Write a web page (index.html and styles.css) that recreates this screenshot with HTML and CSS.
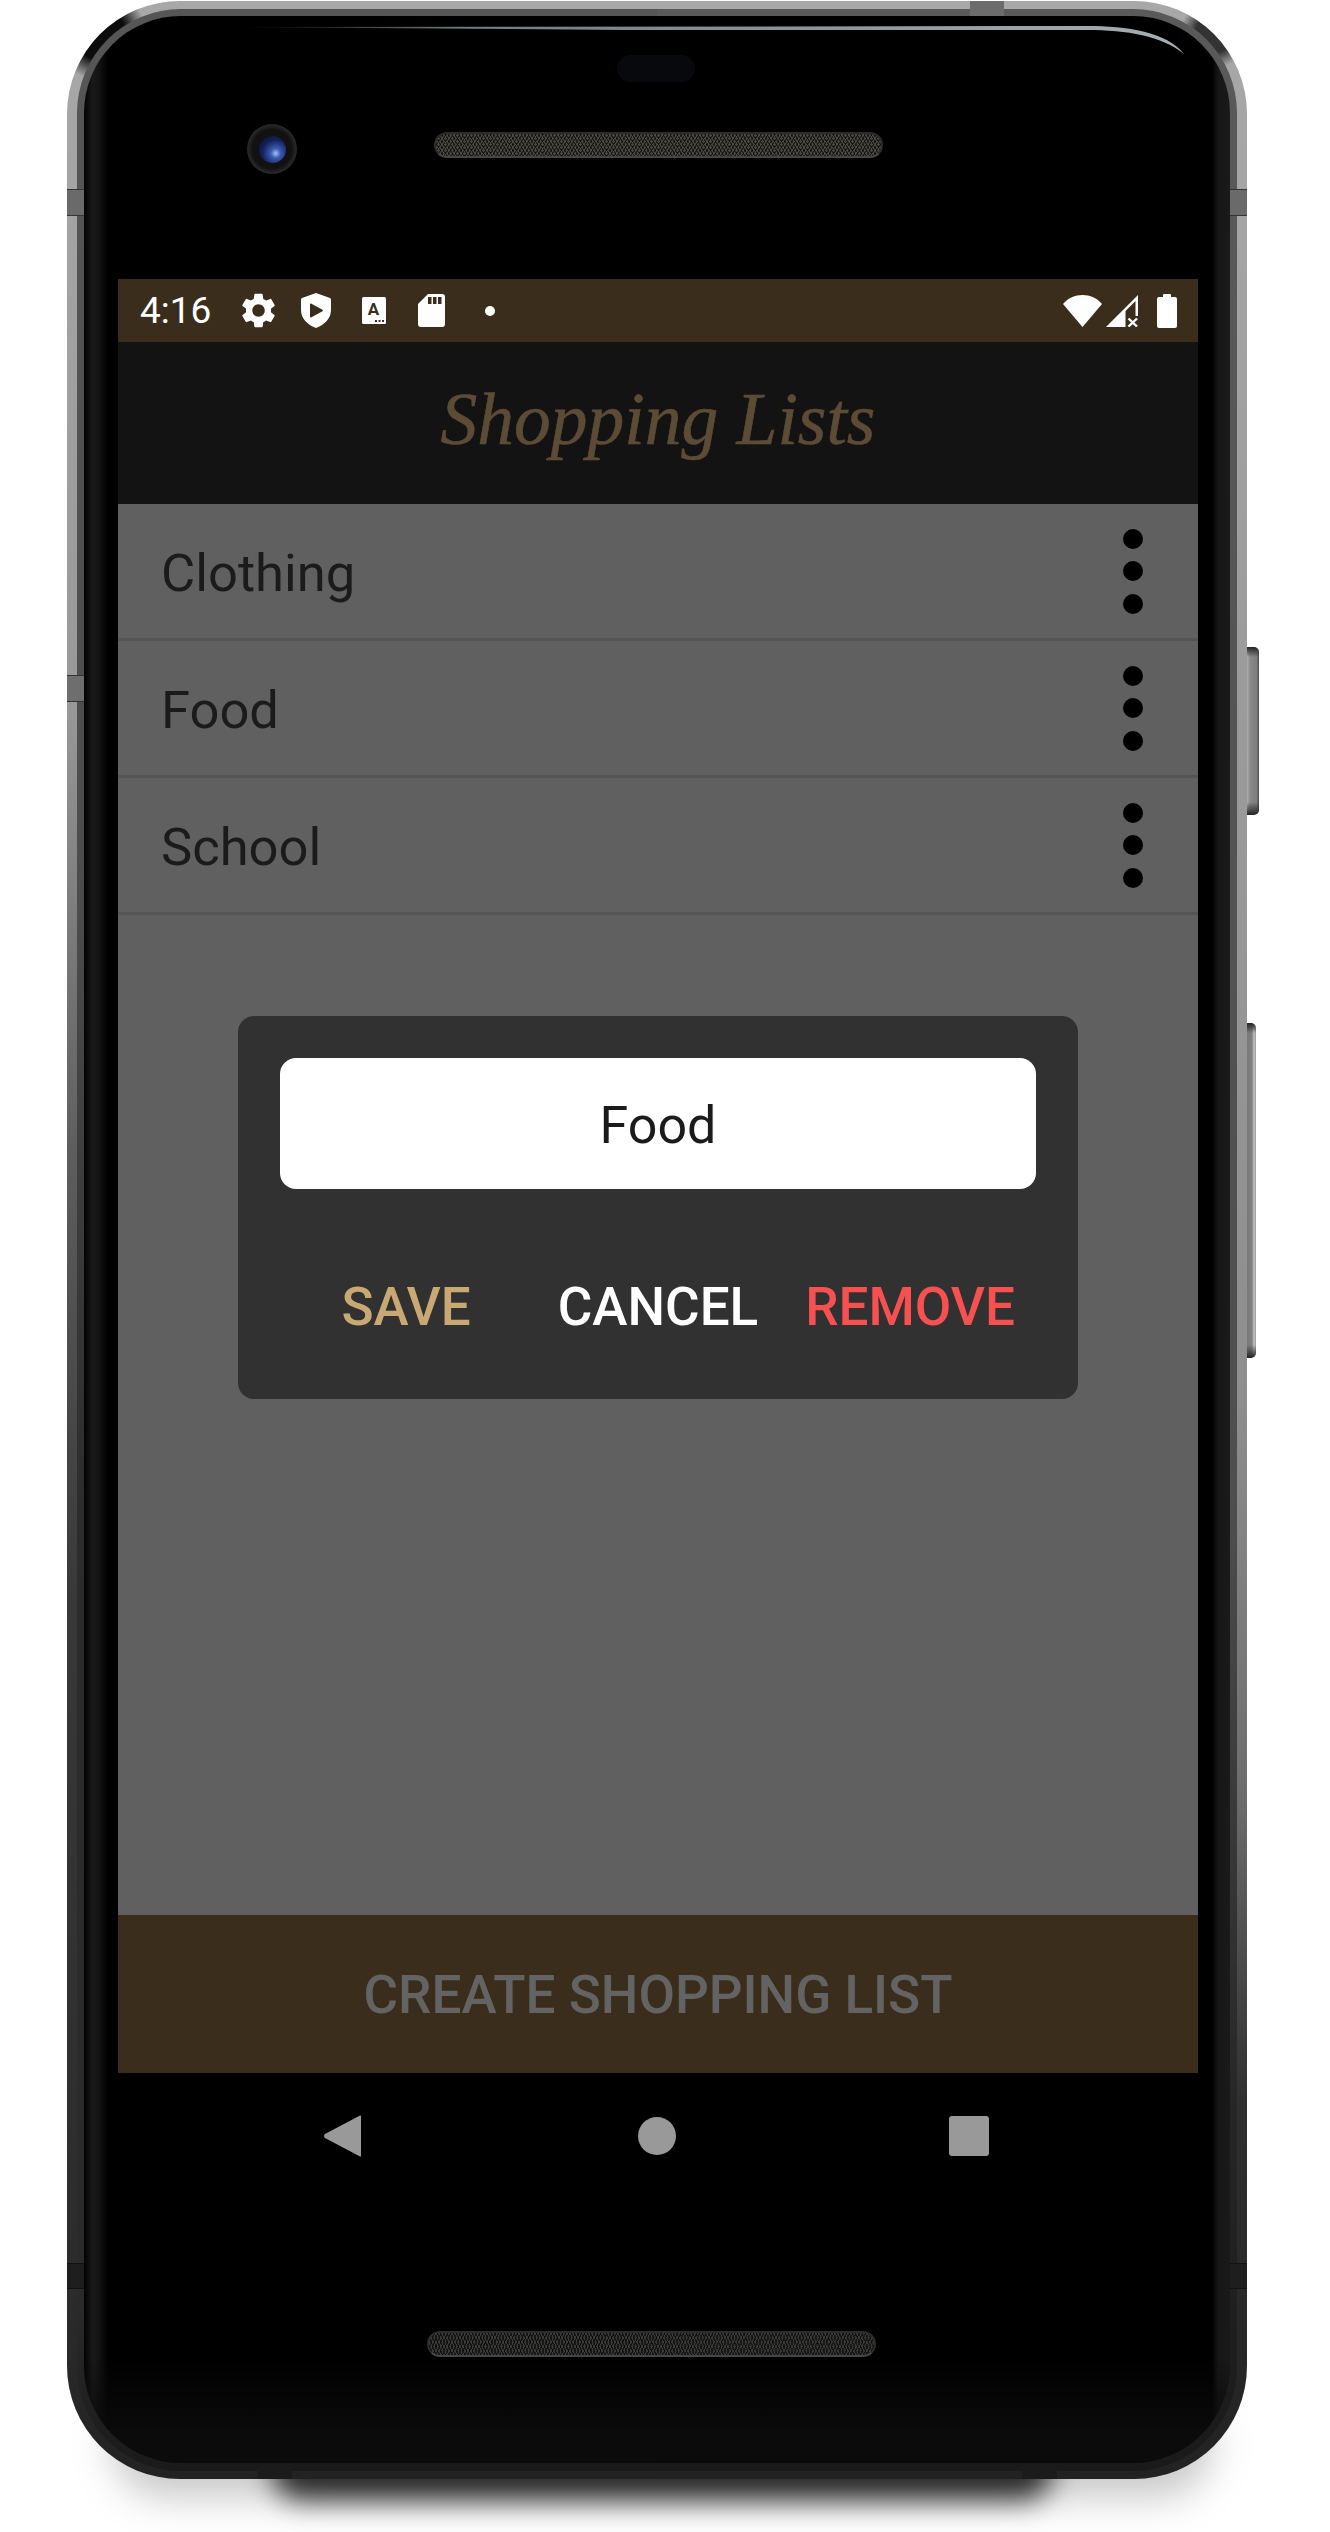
FILE: index.html
```html
<!DOCTYPE html>
<html>
<head>
  <meta charset="UTF-8">
  <title>Shopping Lists</title>
  <link rel="stylesheet" href="styles.css">
</head>
<body>
  <div class="phone">
    <div class="shadow"></div>
    <div class="btn-power"></div>
    <div class="btn-volume"></div>
    <div class="joint joint-left"></div>
    <div class="joint joint-left-mid"></div>
    <div class="joint joint-right"></div>
    <div class="joint joint-left-low"></div>
    <div class="joint joint-right-low"></div>
    <div class="joint joint-top"></div>
    <div class="joint joint-bottom-a"></div>
    <div class="joint joint-bottom-b"></div>

    <div class="metal">
      <div class="band">
        <div class="face">
          <svg class="gloss" width="960" height="34" viewBox="0 0 960 34">
            <defs>
              <linearGradient id="glossfade" x1="0" x2="1" y1="0" y2="0">
                <stop offset="0" stop-color="#a5b0b3" stop-opacity="0"/>
                <stop offset="0.25" stop-color="#a5b0b3" stop-opacity="0.7"/>
                <stop offset="1" stop-color="#a5b0b3" stop-opacity="1"/>
              </linearGradient>
            </defs>
            <path d="M0 3 L860 2 C900 2 940 8 957 30 C935 12 900 6 860 6 L400 6 Z" fill="url(#glossfade)"/>
          </svg>

          <div class="bezel-top">
            <div class="earpiece"></div>
            <div class="sensors">
              <div class="camera"><div class="lens"></div></div>
              <div class="speaker"></div>
            </div>
          </div>

          <div class="screen">
            <div class="statusbar">
              <span class="time">4:16</span>
              <svg class="ic-gear" width="33" height="35" viewBox="2.5 2 19 20"><path fill="#fff" d="M19.14 12.94c.04-.3.06-.61.06-.94 0-.32-.02-.64-.07-.94l2.03-1.58c.18-.14.23-.41.12-.61l-1.92-3.32c-.12-.22-.37-.29-.59-.22l-2.39.96c-.5-.38-1.03-.7-1.62-.94l-.36-2.54c-.04-.24-.24-.41-.48-.41h-3.84c-.24 0-.43.17-.47.41l-.36 2.54c-.59.24-1.13.57-1.62.94l-2.39-.96c-.22-.08-.47 0-.59.22L2.74 8.87c-.12.21-.08.47.12.61l2.03 1.58c-.05.3-.09.63-.09.94s.02.64.07.94l-2.03 1.58c-.18.14-.23.41-.12.61l1.92 3.32c.12.22.37.29.59.22l2.39-.96c.5.38 1.03.7 1.62.94l.36 2.54c.05.24.24.41.48.41h3.84c.24 0 .44-.17.47-.41l.36-2.54c.59-.24 1.13-.56 1.62-.94l2.39.96c.22.08.47 0 .59-.22l1.92-3.32c.12-.22.07-.47-.12-.61l-2.01-1.58zM12 15.6c-1.98 0-3.6-1.62-3.6-3.6s1.62-3.6 3.6-3.6 3.6 1.62 3.6 3.6-1.62 3.6-3.6 3.6z"/></svg>
              <svg class="ic-shield" width="30" height="35" viewBox="0 0 30 35"><path fill="#fff" fill-rule="evenodd" d="M15 0 L29 5 Q30 5.5 30 7 V17 C30 26 23 32 15 35 C7 32 0 26 0 17 V7 Q0 5.500 1 5 Z M10 10.500 Q9 10.200 9 11.500 V23.500 Q9 24.800 10 24.500 L21.500 18.300 Q22.500 17.500 21.500 16.700 Z"/></svg>
              <svg class="ic-card" width="24" height="27" viewBox="0 0 24 27">
                <rect width="24" height="27" rx="1.500" fill="#fff"/>
                <text class="card-letter" x="11.500" y="18" text-anchor="middle">A</text>
                <rect x="13" y="23" width="2" height="2" fill="#3b2d1b"/>
                <rect x="16.500" y="23" width="2" height="2" fill="#3b2d1b"/>
                <rect x="20" y="23" width="2" height="2" fill="#3b2d1b"/>
              </svg>
              <svg class="ic-sd" width="27" height="33" viewBox="0 0 27 33">
                <path fill="#fff" d="M10 0 H24 Q27 0 27 3 V30 Q27 33 24 33 H3 Q0 33 0 30 V10 Z"/>
                <rect x="10" y="3" width="3.500" height="7" fill="#3b2d1b"/>
                <rect x="15" y="3" width="3.500" height="7" fill="#3b2d1b"/>
                <rect x="20" y="3" width="3.500" height="7" fill="#3b2d1b"/>
              </svg>
              <span class="status-dot"></span>
              <svg class="ic-wifi" width="39" height="32" viewBox="0 0 39 32"><path fill="#fff" d="M0 9 C5 3 12 0 19.500 0 S34 3 39 9 L19.500 32 Z"/></svg>
              <svg class="ic-signal" width="32" height="32" viewBox="0 0 32 32">
                <path fill="#fff" d="M0 32 L32 0 V21 H29.500 V6 L19.500 16 V32 Z"/>
                <path stroke="#fff" stroke-width="2.400" d="M22.500 23.500 L31 31.500 M31 23.500 L22.500 31.500"/>
              </svg>
              <svg class="ic-battery" width="20" height="34" viewBox="0 0 20 34"><path fill="#fff" d="M6 1 Q6 0 7 0 H13 Q14 0 14 1 V3 H18 Q20 3 20 5 V32 Q20 34 18 34 H2 Q0 34 0 32 V5 Q0 3 2 3 H6 Z"/></svg>
            </div>

            <div class="toolbar">
              <h1 class="title">Shopping Lists</h1>
            </div>

            <div class="content">
              <div class="row">
                <span class="row-name">Clothing</span>
                <div class="kebab"><i></i><i></i><i></i></div>
              </div>
              <div class="row">
                <span class="row-name">Food</span>
                <div class="kebab"><i></i><i></i><i></i></div>
              </div>
              <div class="row">
                <span class="row-name">School</span>
                <div class="kebab"><i></i><i></i><i></i></div>
              </div>

              <div class="overlay">
                <div class="dialog">
                  <div class="name-field">Food</div>
                  <div class="actions">
                    <span class="act-save">SAVE</span>
                    <span class="act-cancel">CANCEL</span>
                    <span class="act-remove">REMOVE</span>
                  </div>
                </div>
              </div>
            </div>

            <div class="create">CREATE SHOPPING LIST</div>
          </div>

          <div class="navbar">
            <svg class="nav-back" width="37" height="42" viewBox="0 0 37 42"><path fill="#999" d="M36 0.500 Q37 0 37 1.500 V40.500 Q37 42 36 41.500 L1 23 Q-1 21 1 19 Z"/></svg>
            <span class="nav-home"></span>
            <span class="nav-recent"></span>
          </div>
          <div class="speaker speaker-low"></div>
        </div>
      </div>
    </div>
  </div>
</body>
</html>
```

FILE: styles.css
```css
html, body{
  margin:0;
  height:2532px;
  overflow:hidden;
  background:#fff;
  font-family:Roboto, sans-serif;
}

/* device shell */
.phone{
  position:relative;
  box-sizing:border-box;
  width:1180px;
  height:2478px;
  margin:1px 0 0 67px;
}
.metal{
  position:relative;
  box-sizing:border-box;
  height:100%;
  padding:8px 10px;
  border-radius:113px;
  background:
    radial-gradient(circle 46px at 33px 33px, #0c0c0c 55%, transparent),
    radial-gradient(circle 34px at calc(100% - 33px) 33px, #333 55%, transparent),
    linear-gradient(180deg, #a8a8a8 0, #999 700px, #5e5e5e 1150px, #383838 1600px, #2b2b2b 2300px, #222 100%) left/50% 100% no-repeat,
    linear-gradient(180deg, #a8a8a8 0, #8e8e8e 1400px, #6c6c6c 1800px, #2f2f2f 2100px, #222 100%) right/50% 100% no-repeat;
}
.band{
  box-sizing:border-box;
  height:100%;
  padding:7px 7px 8px;
  border-radius:104px;
  background:
    linear-gradient(180deg, #565656 0, #4c4c4c 900px, #2c2c2c 1500px, #2a2a2a 2300px, #1a1a1a 100%) left/50% 100% no-repeat,
    linear-gradient(180deg, #5a5a5a 0, #4e4e4e 1500px, #262626 2100px, #1a1a1a 100%) right/50% 100% no-repeat;
}
.face{
  position:relative;
  height:100%;
  border-radius:97px;
  overflow:hidden;
  background:
    linear-gradient(180deg, transparent 2340px, #0b0b0b 2420px),
    linear-gradient(90deg, #020202 0, #1a1a1a 9px, #141414 14px, #000 24px, #000 1128px, #161616 1134px, #1a1a1a 1146px);
}
.gloss{
  position:absolute;
  left:143px;
  top:8px;
}
.shadow{
  position:absolute;
  left:205px;
  top:2440px;
  width:780px;
  height:60px;
  border-radius:50px;
  background:#333;
  filter:blur(14px);
}
.shadow::before{
  content:"";
  position:absolute;
  left:-160px;
  right:-160px;
  top:-50px;
  bottom:4px;
  border-radius:60px;
  background:rgba(0,0,0,0.22);
  filter:blur(14px);
}

/* bits on the edge of the frame */
.btn-power{
  position:absolute;
  left:1179px;
  top:646px;
  width:13px;
  height:168px;
  border-radius:0 5px 5px 0;
  background:
    linear-gradient(180deg, #222 0, transparent 10px, transparent 155px, #222 100%),
    linear-gradient(90deg, #bbb 0, #8a8a8a 4px, #7c7c7c 11px, #444 100%);
}
.btn-volume{
  position:absolute;
  left:1179px;
  top:1022px;
  width:10px;
  height:335px;
  border-radius:0 5px 5px 0;
  background:
    linear-gradient(180deg, #222 0, transparent 10px, transparent 322px, #222 100%),
    linear-gradient(90deg, #777 0, #808080 6px, #c4c4c4 8px, #999 100%);
}
.joint{
  position:absolute;
  z-index:2;
  box-sizing:border-box;
  width:17px;
}
.joint-left{
  left:0;
  top:188px;
  height:27px;
  background:#6a6a6a;
  border-top:1px solid #333;
  border-bottom:1px solid #333;
}
.joint-left-mid{
  left:0;
  top:674px;
  height:27px;
  background:#6e6e6e;
  border-top:1px solid #333;
  border-bottom:1px solid #333;
}
.joint-right{
  left:1163px;
  top:188px;
  height:27px;
  background:#6a6a6a;
  border-top:1px solid #333;
  border-bottom:1px solid #333;
}
.joint-left-low{
  left:0;
  top:2262px;
  height:26px;
  background:#1e1e1e;
  border-top:1px solid #111;
  border-bottom:1px solid #111;
}
.joint-right-low{
  left:1163px;
  top:2262px;
  height:26px;
  background:#1e1e1e;
  border-top:1px solid #111;
  border-bottom:1px solid #111;
}
.joint-top{
  left:903px;
  top:0;
  width:34px;
  height:15px;
  background:#6c6c6c;
}
.joint-bottom-a{
  left:191px;
  top:2463px;
  width:34px;
  height:15px;
  background:#1b1b1b;
}
.joint-bottom-b{
  left:955px;
  top:2463px;
  width:35px;
  height:15px;
  background:#1b1b1b;
}

/* top bezel */
.bezel-top{
  height:263px;
  padding-top:39px;
  box-sizing:border-box;
}
.earpiece{
  width:78px;
  height:27px;
  margin-left:533px;
  border-radius:14px;
  background:#08090c;
}
.sensors{
  display:flex;
  align-items:flex-start;
  margin-top:42px;
  padding-left:163px;
}
.camera{
  display:flex;
  align-items:center;
  justify-content:center;
  width:50px;
  height:50px;
  border-radius:50%;
  background:radial-gradient(circle, #111 0, #111 55%, #2a2a2c 70%, #1c1c1e 100%);
}
.lens{
  width:27px;
  height:27px;
  border-radius:50%;
  background:radial-gradient(circle at 62% 64%, #a8c0f0 0, #3a5cb4 20%, #14225a 55%, #070a1a 100%);
}
.speaker{
  box-sizing:border-box;
  width:449px;
  height:26px;
  margin:8px 0 0 137px;
  border-radius:13px;
  border:2px solid #2c2c2c;
  border-bottom-color:#454545;
  background:
    repeating-linear-gradient(60deg, rgba(0,0,0,0.55) 0, rgba(0,0,0,0.55) 1px, transparent 1px, transparent 3px),
    repeating-linear-gradient(-60deg, rgba(0,0,0,0.55) 0, rgba(0,0,0,0.55) 1px, transparent 1px, transparent 3px),
    #4a4842;
}
.speaker-low{
  margin:174px 0 0 343px;
  background:
    repeating-linear-gradient(70deg, rgba(0,0,0,0.6) 0, rgba(0,0,0,0.6) 1px, transparent 1px, transparent 3px),
    repeating-linear-gradient(-70deg, rgba(0,0,0,0.6) 0, rgba(0,0,0,0.6) 1px, transparent 1px, transparent 3px),
    #3a3a38;
}

/* app screen */
.screen{
  display:flex;
  flex-direction:column;
  width:1080px;
  height:1794px;
  margin-left:34px;
}
.statusbar{
  display:flex;
  align-items:center;
  flex:none;
  box-sizing:border-box;
  height:63px;
  padding:0 21px 0 22px;
  background:#3b2d1b;
}
.time{
  width:69px;
  font-size:37px;
  color:#fff;
}
.ic-gear{margin-left:33px;}
.ic-shield{margin-left:26px;}
.ic-card{margin-left:31px;}
.ic-sd{margin-left:32px;}
.status-dot{
  width:10px;
  height:10px;
  margin:0 auto 0 40px;
  border-radius:50%;
  background:#fff;
}
.ic-signal{margin-left:4px;}
.ic-battery{margin-left:19px;}
.card-letter{
  font-family:Roboto, sans-serif;
  font-size:17px;
  font-weight:700;
  fill:#3b2d1b;
}

.toolbar{
  display:flex;
  align-items:center;
  justify-content:center;
  flex:none;
  box-sizing:border-box;
  height:162px;
  padding-bottom:6px;
  background:#131313;
}
.title{
  margin:0;
  font-family:"Liberation Serif", serif;
  font-size:73.5px;
  font-style:italic;
  font-weight:400;
  color:#5c4c36;
  -webkit-text-stroke:0.6px #5c4c36;
}

.content{
  position:relative;
  flex:1;
  background:#606060;
}
.row{
  display:flex;
  align-items:center;
  justify-content:space-between;
  box-sizing:border-box;
  height:137px;
  padding:0 55px 0 43px;
  border-bottom:3px solid #555;
}
.row-name{
  padding-top:3px;
  font-size:52.5px;
  color:#1b1b1b;
}
.kebab{
  display:flex;
  flex-direction:column;
  gap:12.5px;
}
.kebab i{
  display:block;
  width:20px;
  height:20px;
  border-radius:50%;
  background:#000;
}

.overlay{
  position:absolute;
  top:0;
  left:0;
  right:0;
  bottom:5px;
  display:flex;
  align-items:center;
  justify-content:center;
}
.dialog{
  box-sizing:border-box;
  width:840px;
  height:383px;
  padding:42px 42px 0;
  border-radius:16px;
  background:#313131;
}
.name-field{
  height:131px;
  line-height:135px;
  text-align:center;
  font-size:52px;
  color:#1b1b1b;
  background:#fff;
  border-radius:16px;
}
.actions{
  display:grid;
  grid-template-columns:repeat(3, 1fr);
  margin-top:88px;
  text-align:center;
  font-size:53px;
  line-height:60px;
  font-weight:500;
}
.act-save{color:#c9a873;}
.act-cancel{color:#fff;}
.act-remove{color:#f65050;}

.create{
  flex:none;
  height:158px;
  line-height:161px;
  text-align:center;
  font-size:53px;
  font-weight:500;
  color:#636363;
  background:#3b2d1b;
}

/* nav keys */
.navbar{
  display:flex;
  align-items:center;
  margin-top:42px;
  padding-left:240px;
}
.nav-home{
  width:38px;
  height:38px;
  margin:0 273px 0 277px;
  border-radius:50%;
  background:#999;
}
.nav-recent{
  width:40px;
  height:40px;
  border-radius:3px;
  background:#999;
}
```
